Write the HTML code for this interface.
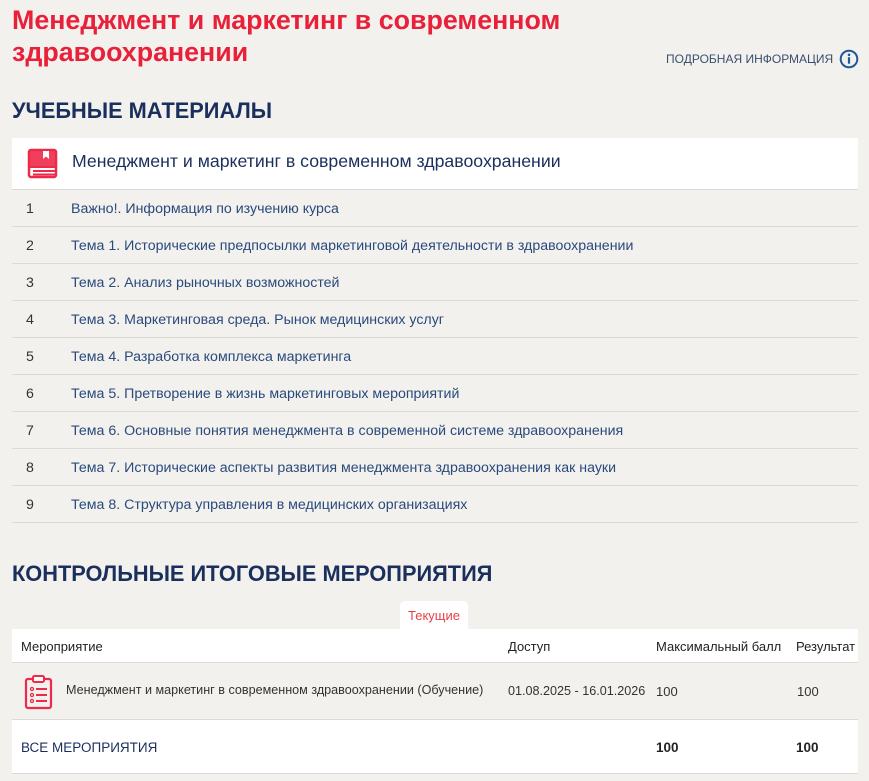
<!DOCTYPE html>
<html><head><meta charset="utf-8"><style>
body{margin:0;background:#f2f1ee;font-family:"Liberation Sans",sans-serif;width:869px;height:781px;overflow:hidden;position:relative}
.a{position:absolute}
h1{position:absolute;left:12px;top:4px;margin:0;font-size:26.8px;line-height:32px;font-weight:bold;color:#e8203a;letter-spacing:0px}
.h2{position:absolute;left:12px;margin:0;font-size:22px;color:#1b2f5c;font-weight:bold;letter-spacing:0px;transform-origin:left}
.row{position:absolute;left:12px;width:846px;height:36px;border-bottom:1px solid #dcdad6;font-size:14.2px;line-height:39px}
.row .n{position:absolute;left:14px;color:#333}
.row .t{position:absolute;left:59px;color:#2a4a7c}
.th{font-size:13px;color:#222}
</style></head><body>
<h1>Менеджмент и маркетинг в современном<br>здравоохранении</h1>
<div class="a" style="left:666px;top:52px;font-size:12px;color:#3a4e6e">ПОДРОБНАЯ ИНФОРМАЦИЯ</div>
<svg class="a" style="left:839px;top:49px" width="20" height="20" viewBox="0 0 20 20"><circle cx="10" cy="10" r="8.3" fill="none" stroke="#1d5a9a" stroke-width="2"/><circle cx="10" cy="5.8" r="1.3" fill="#1d5a9a"/><rect x="8.9" y="8.2" width="2.2" height="6.5" fill="#1d5a9a"/></svg>
<div class="h2" style="top:98px;transform:scaleX(0.99)">УЧЕБНЫЕ МАТЕРИАЛЫ</div>
<div class="a" style="left:12px;top:138px;width:846px;height:51px;background:#fff;border-bottom:1px solid #dcdad6"></div>
<svg class="a" style="left:27px;top:148px" width="32" height="32" viewBox="0 0 32 32"><rect x="2" y="2" width="27" height="27" rx="2" fill="none" stroke="#ee2a4a" stroke-width="2.5"/><path d="M2 19H29M6 23H29M6 26.5H29" stroke="#ee2a4a" stroke-width="2"/><rect x="3" y="3" width="25" height="16" fill="#ee2a4a" opacity="0.9"/><path d="M16 3V11L19 8.5L22 11V3Z" fill="#fff"/></svg>
<div class="a" style="left:72px;top:151px;font-size:17.7px;color:#1b2f5c">Менеджмент и маркетинг в современном здравоохранении</div>
<div class="row" style="top:190px"><span class="n">1</span><span class="t">Важно!. Информация по изучению курса</span></div>
<div class="row" style="top:227px"><span class="n">2</span><span class="t">Тема 1. Исторические предпосылки маркетинговой деятельности в здравоохранении</span></div>
<div class="row" style="top:264px"><span class="n">3</span><span class="t">Тема 2. Анализ рыночных возможностей</span></div>
<div class="row" style="top:301px"><span class="n">4</span><span class="t">Тема 3. Маркетинговая среда. Рынок медицинских услуг</span></div>
<div class="row" style="top:338px"><span class="n">5</span><span class="t">Тема 4. Разработка комплекса маркетинга</span></div>
<div class="row" style="top:375px"><span class="n">6</span><span class="t">Тема 5. Претворение в жизнь маркетинговых мероприятий</span></div>
<div class="row" style="top:412px"><span class="n">7</span><span class="t">Тема 6. Основные понятия менеджмента в современной системе здравоохранения</span></div>
<div class="row" style="top:449px"><span class="n">8</span><span class="t">Тема 7. Исторические аспекты развития менеджмента здравоохранения как науки</span></div>
<div class="row" style="top:486px"><span class="n">9</span><span class="t">Тема 8. Структура управления в медицинских организациях</span></div>
<div class="h2" style="top:561px;transform:scaleX(0.99)">КОНТРОЛЬНЫЕ ИТОГОВЫЕ МЕРОПРИЯТИЯ</div>
<div class="a" style="left:400px;top:601px;width:68px;height:30px;background:#fff;border-radius:5px 5px 0 0;color:#e8404a;font-size:13px;text-align:center;line-height:29px">Текущие</div>
<div class="a" style="left:12px;top:629px;width:846px;height:33px;background:#fff;border-bottom:1px solid #dcdad6"></div>
<div class="a th" style="left:21px;top:639px">Мероприятие</div>
<div class="a th" style="left:508px;top:639px">Доступ</div>
<div class="a th" style="left:656px;top:639px">Максимальный балл</div>
<div class="a th" style="left:796px;top:639px">Результат</div>
<div class="a" style="left:12px;top:663px;width:846px;height:56px;border-bottom:1px solid #dcdad6"></div>
<svg class="a" style="left:24px;top:674px" width="30" height="36" viewBox="0 0 30 36"><rect x="2" y="5" width="25" height="29" rx="2" fill="none" stroke="#ee2a4a" stroke-width="2.2"/><rect x="9" y="2" width="11" height="6" rx="1.5" fill="#fff" stroke="#ee2a4a" stroke-width="2"/><circle cx="8" cy="15" r="1.5" fill="none" stroke="#ee2a4a" stroke-width="1.3"/><circle cx="8" cy="21" r="1.5" fill="none" stroke="#ee2a4a" stroke-width="1.3"/><circle cx="8" cy="27" r="1.5" fill="none" stroke="#ee2a4a" stroke-width="1.3"/><path d="M12 15H23M12 21H23M12 27H23" stroke="#ee2a4a" stroke-width="2"/></svg>
<div class="a" style="left:66px;top:683px;font-size:12.6px;color:#333">Менеджмент и маркетинг в современном здравоохранении (Обучение)</div>
<div class="a" style="left:508px;top:684px;font-size:12.6px;color:#333">01.08.2025 - 16.01.2026</div>
<div class="a" style="left:656px;top:684px;font-size:13px;color:#333">100</div>
<div class="a" style="left:797px;top:684px;font-size:13px;color:#333">100</div>
<div class="a" style="left:12px;top:720px;width:846px;height:53px;background:#fff;border-bottom:1px solid #dcdad6"></div>
<div class="a" style="left:21px;top:740px;font-size:13.5px;color:#1b2f5c">ВСЕ МЕРОПРИЯТИЯ</div>
<div class="a" style="left:656px;top:740px;font-size:13.5px;font-weight:bold;color:#222">100</div>
<div class="a" style="left:796px;top:740px;font-size:13.5px;font-weight:bold;color:#222">100</div>
</body></html>
